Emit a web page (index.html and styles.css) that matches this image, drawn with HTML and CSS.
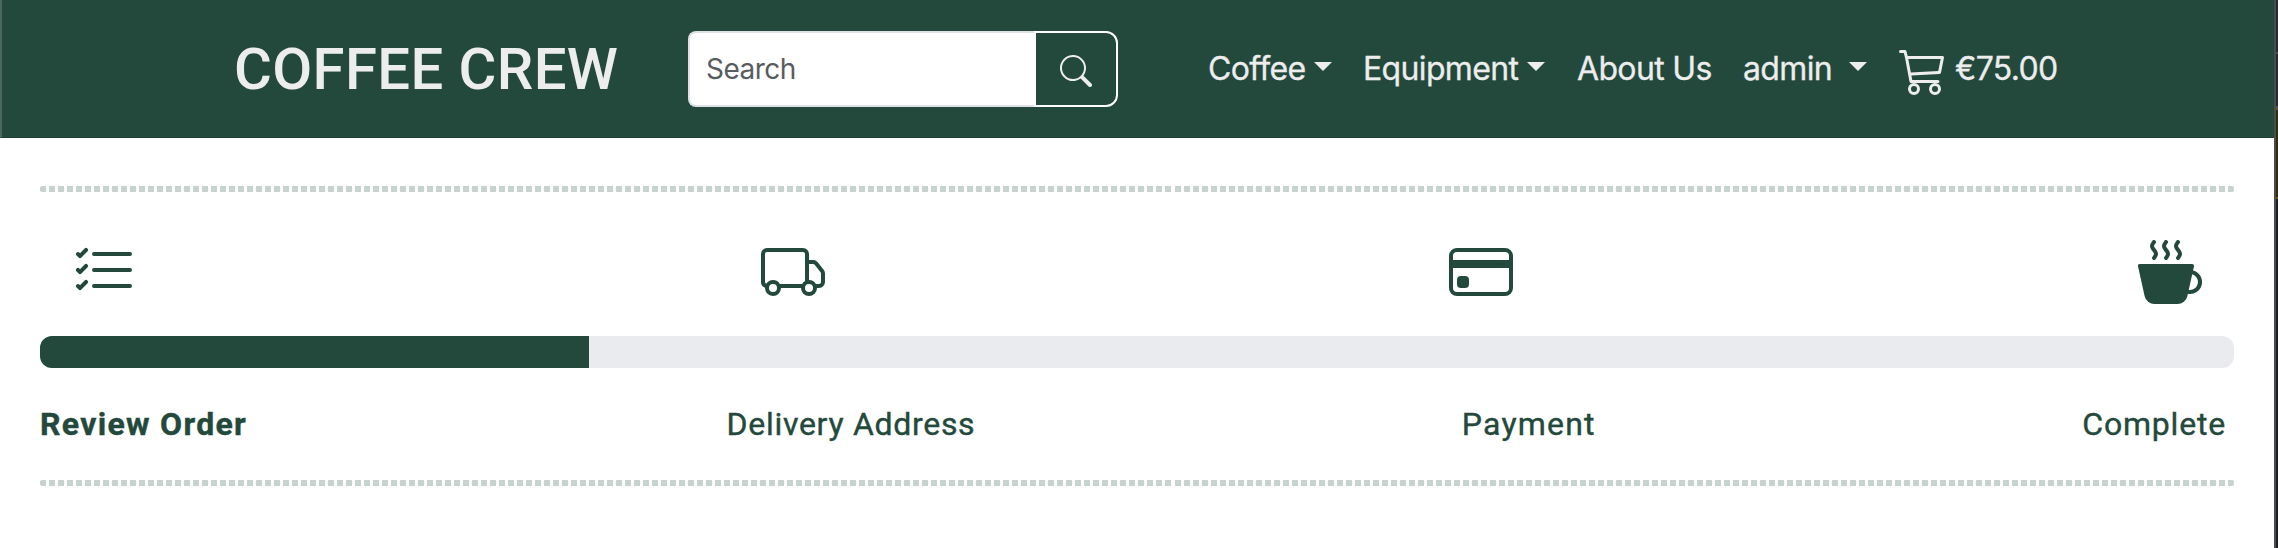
FILE: index.html
```html
<!DOCTYPE html>
<html lang="en">
<head>
<meta charset="utf-8">
<title>Coffee Crew</title>
<link rel="stylesheet" href="styles.css">
</head>
<body>
<div class="page">
  <div class="content">
  <header class="navbar">
    <a class="brand">COFFEE CREW</a>
    <form class="search">
      <input class="search-input" type="text" placeholder="Search">
      <button class="search-button" type="button" aria-label="Search">
        <svg class="search-icon" viewBox="0 0 16 16" fill="currentColor"><path d="M11.742 10.344a6.5 6.5 0 1 0-1.397 1.398h-.001c.03.04.062.078.098.115l3.85 3.85a1 1 0 0 0 1.415-1.414l-3.85-3.85a1.007 1.007 0 0 0-.115-.1zM12 6.5a5.5 5.5 0 1 1-11 0 5.5 5.5 0 0 1 11 0z"/></svg>
      </button>
    </form>
    <nav class="menu">
      <a class="link coffee">Coffee</a><i class="caret"></i>
      <a class="link equipment">Equipment</a><i class="caret"></i>
      <a class="link about">About Us</a>
      <a class="link admin">admin</a><i class="caret"></i>
      <svg class="cart-icon" viewBox="0 0 16 16" fill="currentColor"><path d="M0 1.5A.5.5 0 0 1 .5 1H2a.5.5 0 0 1 .485.379L2.89 3H14.5a.5.5 0 0 1 .49.598l-1 5a.5.5 0 0 1-.465.401l-9.397.472L4.415 11H13a.5.5 0 0 1 0 1H4a.5.5 0 0 1-.491-.408L2.01 3.607 1.61 2H.5a.5.5 0 0 1-.5-.5zM3.102 4l.84 4.479 9.144-.459L13.89 4H3.102zM5 12a2 2 0 1 0 0 4 2 2 0 0 0 0-4zm7 0a2 2 0 1 0 0 4 2 2 0 0 0 0-4zm-7 1a1 1 0 1 1 0 2 1 1 0 0 1 0-2zm7 0a1 1 0 1 1 0 2 1 1 0 0 1 0-2z"/></svg>
      <a class="link total">€75.00</a>
    </nav>
  </header>
  <main class="checkout">
    <div class="dots"></div>
    <div class="steps-icons">
      <svg class="step-icon" viewBox="0 0 16 16" fill="currentColor"><path d="M5 11.5a.5.5 0 0 1 .5-.5h9a.5.5 0 0 1 0 1h-9a.5.5 0 0 1-.5-.5zm0-4a.5.5 0 0 1 .5-.5h9a.5.5 0 0 1 0 1h-9a.5.5 0 0 1-.5-.5zm0-4a.5.5 0 0 1 .5-.5h9a.5.5 0 0 1 0 1h-9a.5.5 0 0 1-.5-.5zM3.854 2.146a.5.5 0 0 1 0 .708l-1.5 1.5a.5.5 0 0 1-.708 0l-.5-.5a.5.5 0 1 1 .708-.708L2 3.293l1.146-1.147a.5.5 0 0 1 .708 0zm0 4a.5.5 0 0 1 0 .708l-1.5 1.5a.5.5 0 0 1-.708 0l-.5-.5a.5.5 0 1 1 .708-.708L2 7.293l1.146-1.147a.5.5 0 0 1 .708 0zm0 4a.5.5 0 0 1 0 .708l-1.5 1.5a.5.5 0 0 1-.708 0l-.5-.5a.5.5 0 0 1 .708-.708l.146.147 1.146-1.147a.5.5 0 0 1 .708 0z"/></svg>
      <svg class="step-icon" viewBox="0 0 16 16" fill="currentColor"><path d="M0 3.5A1.5 1.5 0 0 1 1.5 2h9A1.5 1.5 0 0 1 12 3.5V5h1.02a1.5 1.5 0 0 1 1.17.563l1.481 1.85a1.5 1.5 0 0 1 .329.938V10.5a1.5 1.5 0 0 1-1.5 1.5H14a2 2 0 1 1-4 0H5a2 2 0 1 1-3.998-.085A1.5 1.5 0 0 1 0 10.5v-7zm1.294 7.456A1.999 1.999 0 0 1 4.732 11h5.536a2.01 2.01 0 0 1 .732-.732V3.5a.5.5 0 0 0-.5-.5h-9a.5.5 0 0 0-.5.5v7a.5.5 0 0 0 .294.456zM12 10a2 2 0 0 1 1.732 1h.768a.5.5 0 0 0 .5-.5V8.35a.5.5 0 0 0-.11-.312l-1.48-1.85A.5.5 0 0 0 13.02 6H12v4zm-9 1a1 1 0 1 0 0 2 1 1 0 0 0 0-2zm9 0a1 1 0 1 0 0 2 1 1 0 0 0 0-2z"/></svg>
      <svg class="step-icon" viewBox="0 0 16 16" fill="currentColor"><path d="M0 4a2 2 0 0 1 2-2h12a2 2 0 0 1 2 2v8a2 2 0 0 1-2 2H2a2 2 0 0 1-2-2V4zm2-1a1 1 0 0 0-1 1v1h14V4a1 1 0 0 0-1-1H2zm13 4H1v5a1 1 0 0 0 1 1h12a1 1 0 0 0 1-1V7z"/><path d="M2 10a1 1 0 0 1 1-1h1a1 1 0 0 1 1 1v1a1 1 0 0 1-1 1H3a1 1 0 0 1-1-1v-1z"/></svg>
      <svg class="step-icon" viewBox="0 0 16 16" fill="currentColor"><path fill-rule="evenodd" d="M.5 6a.5.5 0 0 0-.488.608l1.652 7.434A2.5 2.5 0 0 0 4.104 16h5.792a2.5 2.5 0 0 0 2.44-1.958l.131-.59a3 3 0 0 0 1.3-5.854l.221-.99A.5.5 0 0 0 13.5 6H.5ZM13 12.5a2.01 2.01 0 0 1-.316-.025l.867-3.898A2.001 2.001 0 0 1 13 12.5Z"/><path id="wisp" d="m4.4.8-.003.004-.014.019a4.167 4.167 0 0 0-.204.31 2.327 2.327 0 0 0-.141.267c-.026.06-.034.092-.037.103v.004a.593.593 0 0 0 .091.248c.075.133.178.272.308.445l.01.012c.118.158.26.347.37.543.112.2.22.455.22.745 0 .188-.065.368-.119.494a3.31 3.31 0 0 1-.202.388 5.444 5.444 0 0 1-.253.382l-.018.025-.005.008-.002.002A.5.5 0 0 1 3.6 4.2l.003-.004.014-.019a4.149 4.149 0 0 0 .204-.31 2.06 2.06 0 0 0 .141-.267c.026-.06.034-.092.037-.103a.593.593 0 0 0-.09-.252A4.334 4.334 0 0 0 3.6 2.8l-.01-.012a5.099 5.099 0 0 1-.37-.543A1.53 1.53 0 0 1 3 1.5c0-.188.065-.368.119-.494.059-.138.134-.274.202-.388a5.446 5.446 0 0 1 .253-.382l.025-.035A.5.5 0 0 1 4.4.8Z"/><use href="#wisp" x="3"/><use href="#wisp" x="6"/></svg>
    </div>
    <div class="progress"><div class="progress-fill"></div></div>
    <div class="steps-labels">
      <span class="label current">Review Order</span>
      <span class="label delivery">Delivery Address</span>
      <span class="label payment">Payment</span>
      <span class="label complete">Complete</span>
    </div>
    <div class="dots"></div>
  </main>
  </div>
  <div class="edge"></div>
</div>
</body>
</html>
```
FILE: styles.css
```css
* { box-sizing: border-box; }
body { margin: 0; background: #fff; overflow: hidden; }
.page {
  display: flex;
  height: 548px;
  font-family: Inter, "Liberation Sans", sans-serif;
}
.content { flex: 1; }
.edge {
  width: 4px;
  border-left: 2px solid #4b4a50;
  background: linear-gradient(#28282d 0 52px, #505055 52px 54px, #28282d 54px 106px, #505055 106px 108px, #6b531c 108px 110px, #352b0c 110px 197px, #6b531c 197px 199px, #1e2023 199px);
}
.navbar {
  display: flex;
  align-items: center;
  height: 138px;
  padding-left: 232px;
  background: #23493c;
  border-left: 2px solid #4a6a5f;
  border-bottom: 1px solid #1f4136;
  color: #ededed;
}
.brand {
  width: 454px;
  font: 500 58px/72px Roboto, sans-serif;
  letter-spacing: 0.4px;
  white-space: nowrap;
}
.search { display: flex; width: 430px; height: 76px; }
.search-input {
  width: 346px;
  padding: 0 16px;
  border: 2px solid #dee2e6;
  border-right: 0;
  border-radius: 8px 0 0 8px;
  background: #fff;
  font: 28px Inter, sans-serif;
  letter-spacing: -0.5px;
}
.search-input::placeholder { color: #595c5f; opacity: 1; }
.search-button {
  display: flex;
  align-items: center;
  justify-content: center;
  width: 84px;
  padding: 0;
  border: 2px solid #fff;
  border-radius: 0 12px 12px 0;
  background: #23493c;
  color: #ededed;
}
.search-icon { width: 32px; height: 32px; margin-top: 4px; }
.menu { display: flex; align-items: center; margin-left: 90px; }
.link {
  font-size: 32px;
  line-height: 46px;
  letter-spacing: -0.65px;
  white-space: nowrap;
  -webkit-text-stroke: 0.3px currentColor;
}
.coffee { width: 106px; }
.equipment { width: 164px; margin-left: 31px; }
.about { width: 135px; margin-left: 32px; }
.admin { width: 106px; margin-left: 31px; }
.caret {
  border-top: 9px solid #ededed;
  border-left: 9px solid transparent;
  border-right: 9px solid transparent;
  margin-top: -5px;
}
.cart-icon { width: 48px; height: 48px; margin: 5px 8px 0 32px; }
.checkout { padding: 48px 40px 0; color: #23493c; }
.dots {
  height: 6px;
  border-radius: 2px;
  background: repeating-linear-gradient(90deg, #c8d3cf 0 6px, transparent 6px 9.004px);
}
.steps-icons { display: flex; justify-content: space-between; padding: 48px 32px 32px; }
.step-icon { width: 64px; height: 64px; }
.progress { height: 32px; overflow: hidden; border-radius: 12px; background: #eaebef; }
.progress-fill { width: 25%; height: 100%; background: #23493c; }
.steps-labels {
  display: flex;
  justify-content: space-between;
  height: 112px;
  padding: 32px 8px 0 0;
  font: 32px/48px Roboto, sans-serif;
}
.label { white-space: nowrap; letter-spacing: 0.7px; -webkit-text-stroke: 0.4px currentColor; }
.current { font-weight: 700; letter-spacing: 1.3px; }
.delivery { margin-left: -7px; }
.payment { letter-spacing: 1.2px; }
.complete { letter-spacing: 0.8px; }
```
